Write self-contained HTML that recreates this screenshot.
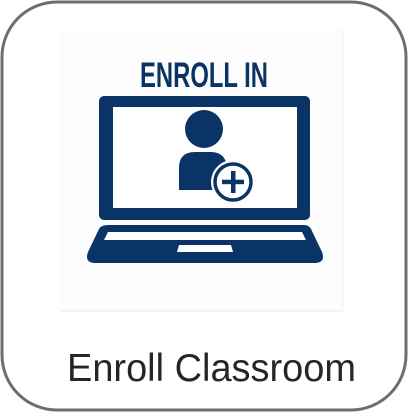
<!DOCTYPE html>
<html><head><style>html,body{margin:0;padding:0;background:#fff;}</style></head>
<body>
<svg width="408" height="412" viewBox="0 0 408 412" xmlns="http://www.w3.org/2000/svg">
<rect x="2" y="2" width="404" height="408" rx="55" ry="55" fill="#fff" stroke="#6e6e6e" stroke-width="3"/>
<rect x="60" y="30" width="283" height="281" fill="#fdfdfd"/>
<line x1="60" y1="311" x2="343" y2="311" stroke="#e8e8e8" stroke-width="1"/>
<line x1="343" y1="30" x2="343" y2="311" stroke="#efefef" stroke-width="1"/>
<text x="140" y="87" textLength="128" lengthAdjust="spacingAndGlyphs" font-family="Liberation Sans, sans-serif" font-weight="bold" font-size="35" fill="#0b3466">ENROLL IN</text>
<rect x="99" y="96" width="211" height="124" rx="5" fill="#0b3466"/>
<rect x="113" y="107" width="184" height="101" fill="#fff"/>
<circle cx="204" cy="129" r="19" fill="#0b3466"/>
<path d="M179 190 V168 Q179 152 195 152 H210 Q223 152 226 162 L223 190 Z" fill="#0b3466"/>
<circle cx="233" cy="182" r="22" fill="#fff"/>
<circle cx="233" cy="182" r="18" fill="#fff" stroke="#0b3466" stroke-width="3.5"/>
<rect x="231" y="171" width="4.5" height="22" fill="#0b3466"/>
<rect x="222" y="179.7" width="22" height="4.5" fill="#0b3466"/>
<path d="M108 225 H304 Q309 225 311 229 L322 252 Q326 263 314 263 H96 Q84 263 88 252 L99 229 Q101 225 108 225 Z" fill="#0b3466"/>
<path d="M104 240 L108 232 H302 L306 240 Z" fill="#fff"/>
<path d="M177 252 L179 245 H231 L233 252 Z" fill="#fff"/>
<text x="67" y="381" textLength="289" lengthAdjust="spacingAndGlyphs" font-family="Liberation Sans, sans-serif" font-size="39" fill="#262626">Enroll Classroom</text>
</svg>
</body></html>
